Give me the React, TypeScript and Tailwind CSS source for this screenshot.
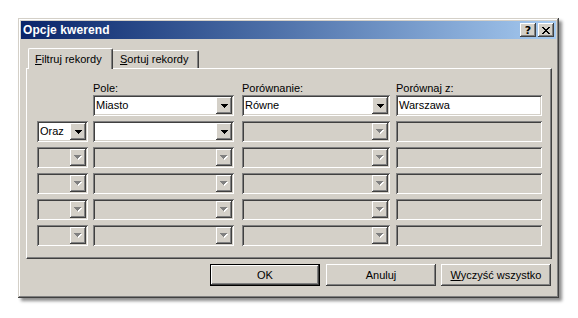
import React from "react";

const RAISED =
  "shadow-[inset_-1px_-1px_#404040,inset_1px_1px_#ffffff,inset_-2px_-2px_#808080,inset_2px_2px_#d4d0c8]";
const SUNKEN =
  "shadow-[inset_1px_1px_#808080,inset_-1px_-1px_#ffffff,inset_2px_2px_#404040,inset_-2px_-2px_#d4d0c8]";

function Arrow({ enabled }: { enabled: boolean }) {
  if (enabled) {
    return (
      <svg width="7" height="4" viewBox="0 0 7 4" shapeRendering="crispEdges">
        <path d="M0 0h7v1H0zM1 1h5v1H1zM2 2h3v1H2zM3 3h1v1H3z" fill="#000" />
      </svg>
    );
  }
  return (
    <svg width="8" height="5" viewBox="0 0 8 5" shapeRendering="crispEdges">
      <path d="M1 1h7v1H1zM2 2h5v1H2zM3 3h3v1H3zM4 4h1v1H4z" fill="#ffffff" />
      <path d="M0 0h7v1H0zM1 1h5v1H1zM2 2h3v1H2zM3 3h1v1H3z" fill="#808080" />
    </svg>
  );
}

function Combo({
  width,
  value,
  enabled,
}: {
  width: string;
  value?: string;
  enabled: boolean;
}) {
  return (
    <div
      className={`${width} h-[21px] shrink-0 flex p-[2px] ${
        enabled ? "bg-white" : "bg-[#d4d0c8]"
      } ${SUNKEN}`}
    >
      <div className="flex-1 pl-[1px] text-[11px] leading-[17px] text-black whitespace-nowrap overflow-hidden">
        {value}
      </div>
      <div
        className={`w-[16px] h-[17px] bg-[#d4d0c8] flex items-center justify-center ${RAISED}`}
      >
        <Arrow enabled={enabled} />
      </div>
    </div>
  );
}

function TextField({
  width,
  value,
  enabled,
}: {
  width: string;
  value?: string;
  enabled: boolean;
}) {
  return (
    <div
      className={`${width} h-[21px] shrink-0 p-[2px] ${
        enabled ? "bg-white" : "bg-[#d4d0c8]"
      } ${SUNKEN}`}
    >
      <div className="pl-[1px] text-[11px] leading-[17px] text-black whitespace-nowrap">
        {value}
      </div>
    </div>
  );
}

function Row({
  first,
  pole,
  poleEnabled,
  rowEnabled,
  por,
  val,
}: {
  first: "none" | "enabled" | "disabled";
  pole?: string;
  poleEnabled: boolean;
  rowEnabled: boolean;
  por?: string;
  val?: string;
}) {
  return (
    <div className="flex h-[21px]">
      {first === "none" ? (
        <div className="w-[51px] shrink-0" />
      ) : (
        <Combo
          width="w-[51px]"
          value={first === "enabled" ? "Oraz" : undefined}
          enabled={first === "enabled"}
        />
      )}
      <div className="ml-[5px]">
        <Combo width="w-[141px]" value={pole} enabled={poleEnabled} />
      </div>
      <div className="ml-[8px]">
        <Combo width="w-[148px]" value={por} enabled={rowEnabled} />
      </div>
      <div className="ml-[6px]">
        <TextField width="w-[146px]" value={val} enabled={rowEnabled} />
      </div>
    </div>
  );
}

function Button({
  children,
  isDefault,
}: {
  children: React.ReactNode;
  isDefault?: boolean;
}) {
  if (isDefault) {
    return (
      <div className="w-[110px] h-[22px] border border-black bg-[#d4d0c8]">
        <div
          className={`w-full h-full flex items-center justify-center text-[11px] text-black ${RAISED}`}
        >
          {children}
        </div>
      </div>
    );
  }
  return (
    <div
      className={`w-[110px] h-[22px] bg-[#d4d0c8] flex items-center justify-center text-[11px] text-black ${RAISED}`}
    >
      {children}
    </div>
  );
}

export default function App() {
  return (
    <div className="w-[578px] h-[318px] bg-white pt-[18px] pl-[18px] font-['Liberation_Sans',Arial,sans-serif]">
      <div className="w-[541px] h-[280px] bg-[#d4d0c8] p-[3px] flex flex-col shadow-[inset_-1px_-1px_#404040,inset_1px_1px_#d4d0c8,inset_-2px_-2px_#808080,inset_2px_2px_#ffffff,3px_3px_3px_rgba(0,0,0,0.45)]">
        {/* Title bar */}
        <div className="h-[18px] flex items-center pl-[2px] pr-[2px] bg-gradient-to-r from-[#0a246a] to-[#a6caf0]">
          <div className="flex-1 text-white font-bold text-[12px] leading-[18px] tracking-[0.1px]">
            Opcje kwerend
          </div>
          <div className="flex gap-[2px]">
            <div
              className={`w-[16px] h-[14px] bg-[#d4d0c8] flex items-center justify-center ${RAISED}`}
            >
              <span className="text-[11px] font-bold leading-[11px] text-black font-['DejaVu_Sans',sans-serif]">
                ?
              </span>
            </div>
            <div
              className={`w-[16px] h-[14px] bg-[#d4d0c8] flex items-center justify-center ${RAISED}`}
            >
              <svg width="8" height="7" viewBox="0 0 8 7" shapeRendering="crispEdges">
                <path
                  d="M0 0h2v1H0zM6 0h2v1H6zM1 1h2v1H1zM5 1h2v1H5zM2 2h4v1H2zM3 3h2v1H3zM2 4h4v1H2zM1 5h2v1H1zM5 5h2v1H5zM0 6h2v1H0zM6 6h2v1H6z"
                  fill="#000"
                />
              </svg>
            </div>
          </div>
        </div>

        {/* Tabs */}
        <div className="mt-[9px] ml-[7px] flex items-end h-[20px]">
          <div className="relative z-10 w-[85px] h-[21px] -mb-[1px] bg-[#d4d0c8] border-t border-l border-white border-r border-r-[#404040] rounded-t-[2px] shadow-[inset_-1px_0_#808080] pl-[6px] pt-[4px] text-[11px] leading-[13px] text-black">
            <span className="underline underline-offset-[1px]">F</span>iltruj rekordy
          </div>
          <div className="w-[86px] h-[18px] bg-[#d4d0c8] border-t border-white border-r border-r-[#404040] rounded-tr-[2px] shadow-[inset_-1px_0_#808080] pl-[7px] pt-[2px] text-[11px] leading-[13px] text-black">
            <span className="underline underline-offset-[1px]">S</span>ortuj rekordy
          </div>
        </div>

        {/* Panel */}
        <div className="ml-[5px] w-[526px] h-[191px] border-t border-l border-white border-r border-b border-r-[#404040] border-b-[#404040] shadow-[inset_-1px_-1px_#808080] pt-[13px] pl-[10px]">
          <div className="flex h-[13px] text-[11px] leading-[13px] text-black">
            <div className="w-[51px] shrink-0" />
            <div className="ml-[5px] w-[141px] shrink-0">Pole:</div>
            <div className="ml-[8px] w-[148px] shrink-0">Porównanie:</div>
            <div className="ml-[6px] w-[146px] shrink-0">Porównaj z:</div>
          </div>
          <div className="flex flex-col gap-[5px]">
            <Row
              first="none"
              pole="Miasto"
              poleEnabled={true}
              rowEnabled={true}
              por="Równe"
              val="Warszawa"
            />
            <Row first="enabled" poleEnabled={true} rowEnabled={false} />
            <Row first="disabled" poleEnabled={false} rowEnabled={false} />
            <Row first="disabled" poleEnabled={false} rowEnabled={false} />
            <Row first="disabled" poleEnabled={false} rowEnabled={false} />
            <Row first="disabled" poleEnabled={false} rowEnabled={false} />
          </div>
        </div>

        {/* Buttons */}
        <div className="mt-[5px] pr-[5px] flex justify-end gap-[5px]">
          <div className="mr-[1px]">
            <Button isDefault>OK</Button>
          </div>
          <Button>Anuluj</Button>
          <Button>
            <span>
              <span className="underline underline-offset-[1px]">W</span>yczyść wszystko
            </span>
          </Button>
        </div>
      </div>
    </div>
  );
}
